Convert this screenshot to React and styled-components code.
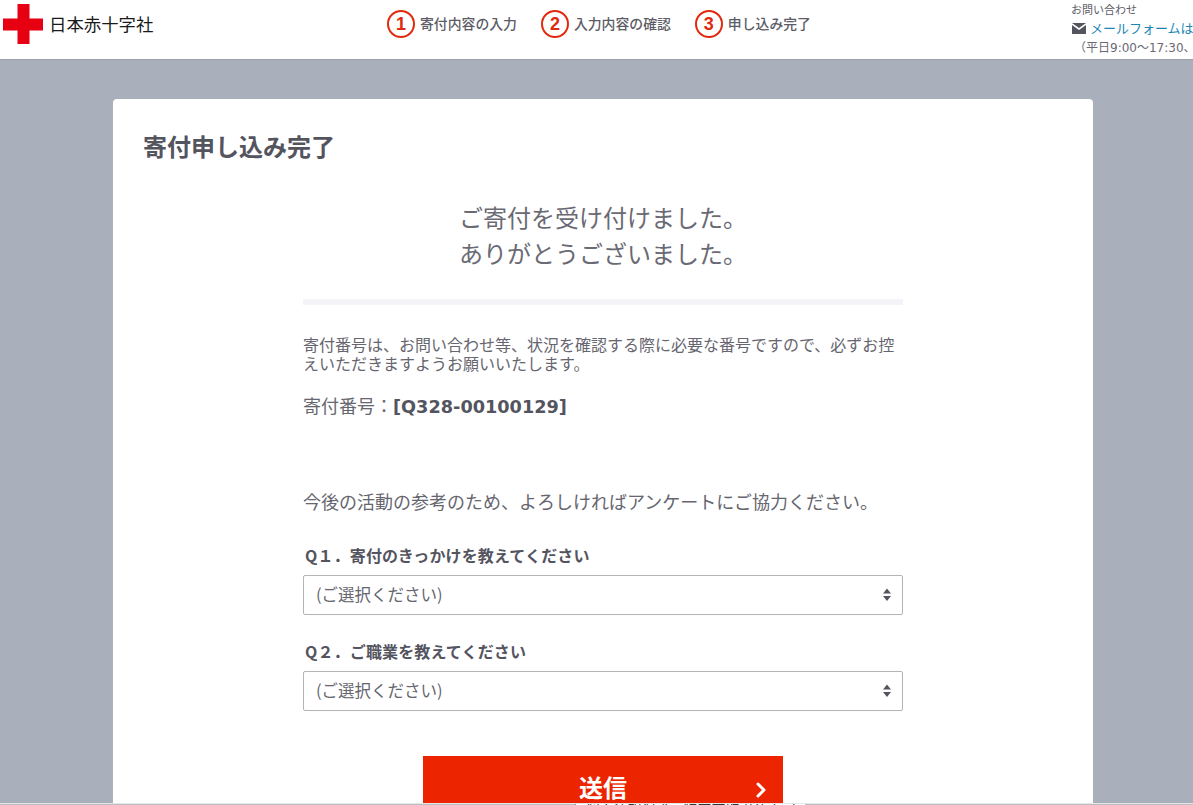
import React from 'react';
import styled, { createGlobalStyle } from 'styled-components';
import { ChevronRight } from 'lucide-react';

const FONT = '"DejaVu Sans", "Noto Sans CJK JP", sans-serif';
const CJK = '"Noto Sans CJK JP", "DejaVu Sans", sans-serif';

const GlobalStyle = createGlobalStyle`
  html, body {
    margin: 0;
    height: 100%;
    overflow: hidden;
    background: #a9b0bb;
  }
  * { box-sizing: border-box; }
  body {
    font-family: ${FONT};
    color: #54545f;
  }
`;

// the original page is wider than the window and gets clipped on the right
const Page = styled.div`
  width: 1206px;
`;

const Header = styled.header`
  height: 60px;
  background: #fff;
  border-bottom: 1px solid #9aa1ad;
  display: flex;
  overflow: hidden;
`;

const Logo = styled.div`
  width: 384px;
  flex: none;
  padding: 4px 0 0 3px;
  display: flex;
  align-items: flex-start;
  gap: 6px;
`;

const LogoText = styled.span`
  font-family: ${CJK};
  font-size: 17.4px;
  line-height: 40px;
  color: #1a1a1a;
  white-space: nowrap;
`;

const Steps = styled.ol`
  list-style: none;
  margin: 0;
  padding: 10px 0 0 3px;
  display: flex;
  gap: 24px;
  width: 684px;
  flex: none;
`;

const Step = styled.li`
  display: flex;
  align-items: flex-start;
  gap: 5px;
  font-family: ${CJK};
  font-size: 13.85px;
  font-weight: 500;
  line-height: 27px;
  height: 28px;
  color: #5c5c66;
  white-space: nowrap;
`;

const StepNumber = styled.span`
  width: 28px;
  height: 28px;
  flex: none;
  border: 2px solid #e0290f;
  border-radius: 50%;
  color: #e0290f;
  font-family: "Liberation Sans", sans-serif;
  font-size: 18px;
  font-weight: 700;
  line-height: 25px;
  text-align: center;
`;

const Contact = styled.div`
  padding: 2px 0 0 3px;
  white-space: nowrap;
`;

const ContactLabel = styled.div`
  font-family: ${CJK};
  font-size: 11px;
  line-height: 14px;
  color: #5c5c66;
`;

const ContactLink = styled.a`
  display: flex;
  align-items: center;
  gap: 4px;
  margin-top: 1px;
  padding-left: 1px;
  font-family: ${CJK};
  font-size: 13px;
  line-height: 22px;
  color: #1a86b8;
`;

const ContactHours = styled.div`
  margin-top: 2px;
  font-size: 12px;
  line-height: 15px;
  padding-left: 3px;
  color: #6a6a74;
`;

const Main = styled.main`
  padding-top: 39px;
  display: flex;
  justify-content: center;
`;

const Card = styled.section`
  width: 980px;
  background: #fff;
  border-radius: 4px;
  padding: 30px 30px 40px;
`;

const Title = styled.h1`
  margin: 0;
  font-family: ${CJK};
  font-size: 24px;
  font-weight: 700;
  line-height: 34px;
  color: #54545f;
`;

const Body = styled.div`
  width: 600px;
  margin: 0 auto;
`;

const Thanks = styled.p`
  margin: 36px 0 0;
  font-family: ${CJK};
  font-size: 24px;
  font-weight: 400;
  line-height: 36px;
  text-align: center;
  color: #6a6a74;
`;

const Divider = styled.hr`
  margin: 28px 0 0;
  height: 6px;
  border: 0;
  background: #f3f3f8;
`;

const Notice = styled.p`
  margin: 30px 0 0;
  font-family: ${CJK};
  font-size: 16px;
  font-weight: 400;
  line-height: 19px;
  color: #66666f;
`;

const DonationNumber = styled.p`
  margin: 20px 0 0;
  font-family: ${CJK};
  font-size: 18px;
  font-weight: 400;
  line-height: 24px;
  color: #66666f;
`;

const DonationCode = styled.strong`
  font-family: ${FONT};
  font-size: 17.7px;
  font-weight: 700;
  color: #54545f;
`;

const SurveyLead = styled.p`
  margin: 69px 0 0;
  font-family: ${CJK};
  font-size: 18px;
  font-weight: 400;
  line-height: 26px;
  color: #66666f;
`;

const Question = styled.label`
  display: block;
  margin: ${props => props.$first ? '29px' : '24px'} 0 0;
  padding-left: 2px;
  font-family: ${CJK};
  font-size: 16px;
  font-weight: 700;
  line-height: 24px;
  letter-spacing: 0.15px;
  color: #54545f;
`;

const SelectBox = styled.div`
  margin-top: 8px;
  height: 40px;
  border: 1px solid #b4b4b4;
  border-radius: 2px;
  padding: 0 10px 2px 12px;
  display: flex;
  align-items: center;
  justify-content: space-between;
  font-family: ${CJK};
  font-size: 16.5px;
  font-weight: 400;
  color: #66666f;
`;

const Submit = styled.button`
  display: flex;
  justify-content: center;
  position: relative;
  width: 360px;
  height: 70px;
  margin: 45px auto 0;
  padding: 13px 0 0;
  border: 0;
  background: #ec2400;
  color: #fff;
  font-family: ${CJK};
  font-size: 24px;
  font-weight: 700;
  line-height: 36px;
`;

const SubmitArrow = styled(ChevronRight)`
  position: absolute;
  right: 10px;
  top: 22px;
`;

const FooterStrip = styled.div`
  position: fixed;
  left: 0;
  right: 0;
  bottom: 0;
  height: 2px;
  padding-left: 575px;
  background: #bdbdbd;
  border-top: 1px solid #e6e6e6;
  overflow: hidden;
`;

const FooterText = styled.div`
  width: 230px;
  margin-top: -1px;
  height: 2px;
  background: #fff;
  border-left: 1px solid #8a8a8a;
  overflow: hidden;
  font-family: ${CJK};
  font-size: 14px;
  line-height: 10px;
  color: #333;
  text-align: center;
  white-space: nowrap;
`;

const ArrowPair = () => (
  <svg width="10" height="16" viewBox="0 0 10 16" aria-hidden="true">
    <path d="M5 2.500 9 7.500H1Z M1 10H9L5 15Z" fill="#54545f" />
  </svg>
);

const CrossLogo = () => (
  <svg width="40" height="40" viewBox="0 0 40 40" aria-hidden="true">
    <path d="M14.5 0H26.5V14.500H40V26.500H26.500V40H14.500V26.500H0V14.500H14.500Z" fill="#e60012" />
  </svg>
);

const MailIcon = () => (
  <svg width="14" height="11" viewBox="0 0 14 11" aria-hidden="true">
    <path d="M0 0H14L7 5Z M0 2V11H14V2L7 7Z" fill="#54545f" />
  </svg>
);

const steps = ['寄付内容の入力', '入力内容の確認', '申し込み完了'];
const questions = ['Q１．寄付のきっかけを教えてください', 'Q２．ご職業を教えてください'];

const App = () => (
  <Page>
    <GlobalStyle />
    <Header>
      <Logo>
        <CrossLogo />
        <LogoText>日本赤十字社</LogoText>
      </Logo>
      <Steps>
        {steps.map((label, index) => (
          <Step key={label}>
            <StepNumber>{index + 1}</StepNumber>
            {label}
          </Step>
        ))}
      </Steps>
      <Contact>
        <ContactLabel>お問い合わせ</ContactLabel>
        <ContactLink>
          <MailIcon />
          メールフォームはこちら
        </ContactLink>
        <ContactHours>（平日9:00～17:30、</ContactHours>
      </Contact>
    </Header>
    <Main>
      <Card>
        <Title>寄付申し込み完了</Title>
        <Body>
          <Thanks>
            ご寄付を受け付けました。
            <br />
            ありがとうございました。
          </Thanks>
          <Divider />
          <Notice>寄付番号は、お問い合わせ等、状況を確認する際に必要な番号ですので、必ずお控えいただきますようお願いいたします。</Notice>
          <DonationNumber>
            寄付番号：<DonationCode>[Q328-00100129]</DonationCode>
          </DonationNumber>
          <SurveyLead>今後の活動の参考のため、よろしければアンケートにご協力ください。</SurveyLead>
          {questions.map((question, index) => (
            <div key={question}>
              <Question $first={index === 0}>{question}</Question>
              <SelectBox>
                (ご選択ください)
                <ArrowPair />
              </SelectBox>
            </div>
          ))}
          <Submit>
            送信
            <SubmitArrow size={24} strokeWidth={3} />
          </Submit>
        </Body>
      </Card>
    </Main>
    <FooterStrip>
      <FooterText>個人情報保護・特定商取引法表記</FooterText>
    </FooterStrip>
  </Page>
);

export default App;
